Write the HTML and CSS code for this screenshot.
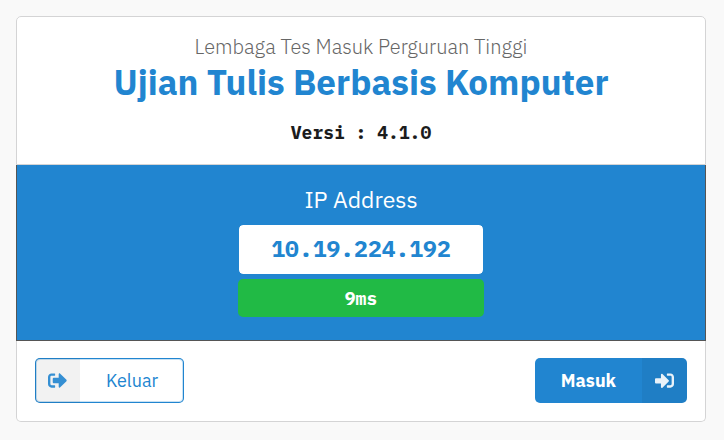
FILE: index.html
```
<!DOCTYPE html>
<html lang="id">
<head>
    <meta charset="UTF-8">
    <meta name="viewport" content="width=device-width, initial-scale=1.0">
    <title>Ujian Tulis Berbasis Komputer</title>
    <link rel="stylesheet" href="styles.css">
</head>
<body>
    <main class="card">
        <header class="card-header">
            <p class="subtitle">Lembaga Tes Masuk Perguruan Tinggi</p>
            <h1 class="title">Ujian Tulis Berbasis Komputer</h1>
            <p class="version">Versi : 4.1.0</p>
        </header>
        <section class="status">
            <h2 class="status-title">IP Address</h2>
            <div class="status-box">
                <div class="ip">10.19.224.192</div>
                <div class="ping">9ms</div>
            </div>
        </section>
        <footer class="actions">
            <button type="button" class="button button-out">
                <span class="button-icon">
                    <svg viewBox="0 0 512 512" aria-hidden="true"><path d="M497 273L329 441c-15 15-41 4.5-41-17v-96H152c-13.3 0-24-10.7-24-24v-96c0-13.3 10.7-24 24-24h136V88c0-21.4 25.9-32 41-17l168 168c9.3 9.4 9.3 24.6 0 34zM192 436v-40c0-6.6-5.4-12-12-12H96c-17.7 0-32-14.3-32-32V160c0-17.7 14.3-32 32-32h84c6.6 0 12-5.4 12-12V76c0-6.6-5.4-12-12-12H96c-53 0-96 43-96 96v192c0 53 43 96 96 96h84c6.6 0 12-5.4 12-12z"/></svg>
                </span>
                <span class="button-text">Keluar</span>
            </button>
            <button type="button" class="button button-in">
                <span class="button-text">Masuk</span>
                <span class="button-icon">
                    <svg viewBox="0 0 512 512" aria-hidden="true"><path d="M416 448h-84c-6.6 0-12-5.4-12-12v-40c0-6.6 5.4-12 12-12h84c17.7 0 32-14.3 32-32V160c0-17.7-14.3-32-32-32h-84c-6.6 0-12-5.4-12-12V76c0-6.6 5.4-12 12-12h84c53 0 96 43 96 96v192c0 53-43 96-96 96zm-47-201L201 79c-15-15-41-4.5-41 17v96H24c-13.3 0-24 10.7-24 24v96c0 13.3 10.7 24 24 24h136v96c0 21.5 26 32 41 17l168-168c9.3-9.4 9.3-24.6 0-34z"/></svg>
                </span>
            </button>
        </footer>
    </main>
</body>
</html>
```
FILE: styles.css
```
* {
    box-sizing: border-box;
}
body {
    margin: 16px 18px 16px 16px;
    background-color: #f9f9f9;
    font-family: "IBM Plex Sans", Roboto, sans-serif;
    text-align: center;
}
p, h1, h2 {
    margin: 0;
}
.card {
    background: #fff;
    border-radius: 5px;
}
.card-header {
    padding: 16px 18px 19px;
    border: 1px solid #d4d4d5;
    border-radius: 5px 5px 0 0;
}
.subtitle {
    font-size: 20px;
    font-weight: 300;
    line-height: 28px;
    color: #666;
}
.title {
    font-size: 35px;
    font-weight: 700;
    line-height: 42px;
    color: #2185d0;
}
.version {
    margin-top: 17px;
    font-family: "IBM Plex Mono", "Liberation Mono", monospace;
    font-size: 18px;
    font-weight: 700;
    line-height: 25px;
    color: #1b1c1d;
}
.status {
    display: flex;
    flex-direction: column;
    align-items: center;
    padding: 20px 18px 23px;
    background: #2185d0;
    border: 1px solid #555;
    border-top: 0;
    color: #fff;
}
.status-title {
    font-size: 23px;
    font-weight: 400;
    line-height: 28px;
}
.status-box {
    display: flex;
    flex-direction: column;
    gap: 4px;
    margin-top: 11px;
    font-family: "IBM Plex Mono", "Liberation Mono", monospace;
    font-weight: 700;
}
.ip {
    padding: 10px 32px 12px;
    background: #fff;
    background-clip: padding-box;
    border: 1px solid #2185d0;
    border-radius: 5px;
    font-size: 23px;
    line-height: 27px;
    color: #2185d0;
}
.ping {
    padding: 8px 8px 6px;
    background: #21ba45;
    border-radius: 5px;
    font-size: 18px;
    line-height: 24px;
}
.actions {
    display: flex;
    justify-content: space-between;
    padding: 17px 18px 18px;
    border: 1px solid #d4d4d5;
    border-top: 0;
    border-radius: 0 0 5px 5px;
}
.button {
    display: flex;
    height: 45px;
    padding: 0;
    overflow: hidden;
    border: 0;
    border-radius: 5px;
    font-family: inherit;
    font-size: 18px;
    line-height: 45px;
    cursor: pointer;
}
.button-text {
    padding: 0 26px;
}
.button-icon {
    display: flex;
    align-items: center;
    justify-content: center;
    width: 45px;
    height: 45px;
    background: rgba(0, 0, 0, 0.05);
}
.button-icon svg {
    width: 19px;
    height: 19px;
    fill: currentColor;
    opacity: 0.9;
}
.button-out {
    background: #fff;
    box-shadow: inset 0 0 0 1px #2185d0, inset 0 0 0 2px #c8e1f3;
    color: #2185d0;
}
.button-in {
    background: #2185d0;
    color: #fff;
    font-weight: 700;
}
```
